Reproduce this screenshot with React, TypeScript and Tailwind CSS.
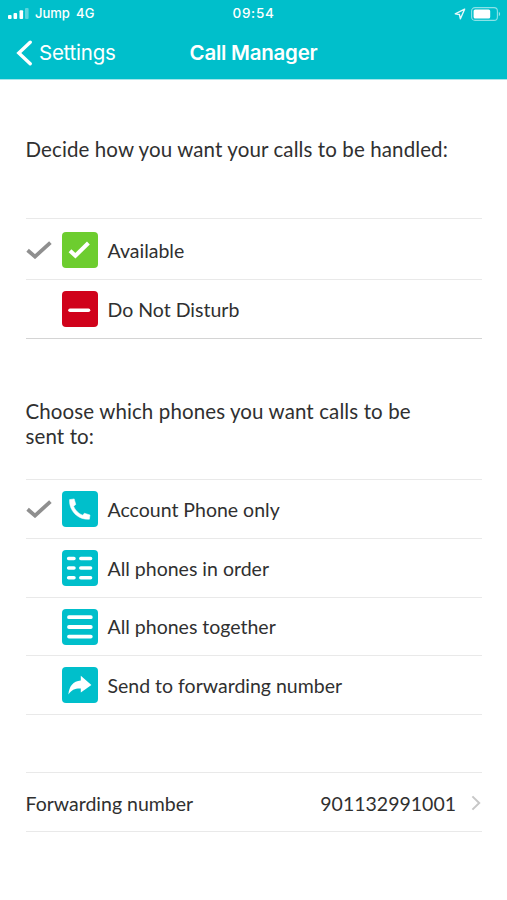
import type { ReactNode } from 'react'

const CHECK = 'M1.6 9.2 L9 15.6 L24.4 1.6'

export default function App() {
  return (
    <div className="h-[900px] w-[507px] overflow-hidden bg-white font-['Lato',sans-serif] text-[19.5px] text-[#303030]">
      <Header />

      <main className="pr-[25px] pl-[25.5px]">
        <h2 className="flex h-[138px] items-center text-[20.5px] leading-[25px] tracking-[0.11px]">
          <span className="whitespace-nowrap">Decide how you want your calls to be handled:</span>
        </h2>

        <ul className="border-b border-[#d4d4d4]">
          <Option label="Available" className="h-[61px] pt-[2px]" selected>
            <Tile className="bg-[#6dcd2f]">
              <path d="M8 18.8 L13.4 23.8 L26.4 11" stroke="#fff" strokeWidth="4" />
            </Tile>
          </Option>
          <Option label="Do Not Disturb" className="h-[59px]">
            <Tile className="bg-[#d0021b]">
              <path d="M8 19.2 H26.5" stroke="#fff" strokeWidth="3.6" strokeLinecap="round" />
            </Tile>
          </Option>
        </ul>

        <h2 className="h-[140px] pt-[60px] text-[20.5px] leading-[25px] tracking-[0.11px]">
          Choose which phones you want calls to be
          <br />
          sent to:
        </h2>

        <ul className="border-b border-[#e9e9e9]">
          <Option label="Account Phone only" className="h-[59px]" selected>
            <Tile className="bg-[#00bfcb]">
              <path
                d="M7.6 8.6 L12.2 7.9 L13.8 13.4 L11.6 15.2 C13.2 19.4 16.4 22.6 20.6 24.2 L22.4 22.2 L28 24 L27.4 28.2 C16.4 29.4 6.6 19.6 7.6 8.6 Z"
                fill="#fff"
                stroke="#fff"
                strokeWidth="0.5"
                strokeLinejoin="round"
              />
            </Tile>
          </Option>
          <Option label="All phones in order" className="h-[59px]">
            <Tile className="bg-[#00bfcb]">
              <path
                d="M6.6 8.4 H12 M18.8 8.4 H28.6 M6.6 18 H12 M18.8 18 H28.6 M6.6 27.8 H12 M18.8 27.8 H28.6"
                stroke="#fff"
                strokeWidth="3.5"
                strokeLinecap="round"
              />
            </Tile>
          </Option>
          <Option label="All phones together" className="h-[58px]">
            <Tile className="bg-[#00bfcb]">
              <path d="M7 8.2 H28.8 M7 18 H28.8 M7 27.6 H28.8" stroke="#fff" strokeWidth="3.8" strokeLinecap="round" />
            </Tile>
          </Option>
          <Option label="Send to forwarding number" className="h-[59px]">
            <Tile className="bg-[#00bfcb]">
              <path d="M18.8 8.8 L29.4 18 L18.8 25.6 V21.4 C13 21.2 9.6 22.6 6.4 27.4 C7.2 19 11 14.2 18.8 13.4 Z" fill="#fff" />
            </Tile>
          </Option>
        </ul>

        <button className="mt-[57px] flex h-[60px] w-full items-center border-y border-[#e9e9e9] pt-[3px] text-left">
          <span>Forwarding number</span>
          <span className="ml-auto">901132991001</span>
          <svg className="mr-[1.5px] mb-[2px] ml-[14.5px] h-[16px] w-[10px]" viewBox="0 0 10 16" fill="none">
            <path d="M1.4 1.4 L8.2 8 L1.4 14.6" stroke="#c7c7c7" strokeWidth="2" />
          </svg>
        </button>
      </main>
    </div>
  )
}

function Header() {
  return (
    <header className="h-[80px] border-b border-[#a5e6ea] bg-[#00bfcb] font-['Inter',sans-serif] text-white">
      <div className="grid h-[27px] grid-cols-3 items-center text-[13px] font-medium">
        <div className="flex items-center pl-[8px]">
          <svg className="h-[11px] w-[22px]" viewBox="0 0 22 11">
            <rect x="0" y="7" width="3.6" height="4" rx="1" fill="#fff" />
            <rect x="5.5" y="5" width="3.6" height="6" rx="1" fill="#fff" />
            <rect x="11.5" y="2.2" width="3.6" height="8.8" rx="1" fill="#fff" />
            <rect x="17" y="0" width="3.6" height="11" rx="1" fill="#fff" opacity="0.35" />
          </svg>
          <span className="ml-[5px]">Jump</span>
          <span className="ml-[6px] tracking-[0.3px]">4G</span>
        </div>
        <span className="text-center text-[13.5px] tracking-[0.7px]">09:54</span>
        <div className="flex items-center justify-end pr-[6px]">
          <svg className="h-[12px] w-[12px]" viewBox="0 0 12 12" fill="none">
            <path d="M10.6 1.2 L1.2 5.8 L5.4 6.5 L6.4 10.8 Z" stroke="#fff" strokeWidth="1.4" strokeLinejoin="round" opacity="0.9" />
          </svg>
          <svg className="ml-[5px] h-[14px] w-[30px]" viewBox="0 0 30 14" fill="none">
            <rect x="0.6" y="0.6" width="25.8" height="12.8" rx="3.4" stroke="#fff" strokeWidth="1.1" opacity="0.55" />
            <rect x="2.6" y="2.4" width="16.6" height="9.2" rx="1.6" fill="#fff" />
            <path d="M27.8 4.8 C29.6 5.6 29.6 8.4 27.8 9.2 Z" fill="#fff" opacity="0.6" />
          </svg>
        </div>
      </div>

      <div className="grid h-[52px] grid-cols-[1fr_auto_1fr] items-center text-[20.5px] tracking-[-0.24px]">
        <button className="flex items-center pl-[16px] font-normal">
          <svg className="h-[26px] w-[17px]" viewBox="0 0 17 26" fill="none">
            <path d="M14.2 2.2 L2.8 13 L14.2 23.8" stroke="#fff" strokeWidth="3.4" strokeLinecap="round" />
          </svg>
          <span className="ml-[6px]">Settings</span>
        </button>
        <h1 className="font-semibold">Call Manager</h1>
        <span />
      </div>
    </header>
  )
}

type OptionProps = {
  label: string
  className: string
  selected?: boolean
  children: ReactNode
}

function Option({ label, className, selected, children }: OptionProps) {
  return (
    <li className={`flex items-center border-t border-[#e9e9e9] ${className}`}>
      <span className="w-[36.5px]">
        {selected && (
          <svg className="h-[18px] w-[26px]" viewBox="0 0 26 18" fill="none">
            <path d={CHECK} stroke="#8f8f8f" strokeWidth="3.8" />
          </svg>
        )}
      </span>
      {children}
      <span className="ml-[9.5px] pt-[1px]">{label}</span>
    </li>
  )
}

function Tile({ className, children }: { className: string; children: ReactNode }) {
  return (
    <span className={`h-[36px] w-[36px] rounded-[4px] ${className}`}>
      <svg className="h-[36px] w-[36px]" viewBox="0 0 36 36" fill="none">
        {children}
      </svg>
    </span>
  )
}
